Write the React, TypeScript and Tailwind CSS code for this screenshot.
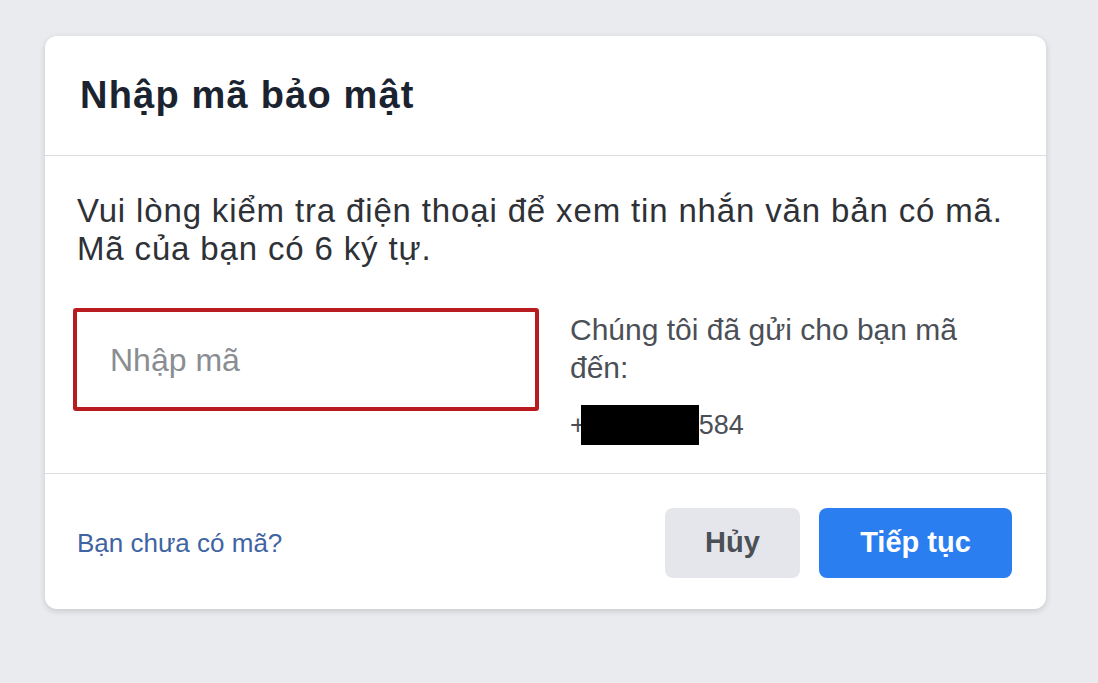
import React from 'react';

export default function App() {
  return (
    <div className="min-h-screen w-full bg-[#e9ebee] pt-[36px] pl-[45px]" style={{ fontFamily: '"Liberation Sans", Arial, sans-serif' }}>
      <div className="w-[1001px] rounded-[12px] bg-white shadow-[0_2px_6px_rgba(0,0,0,0.15)]">
        {/* header */}
        <div className="h-[120px] flex items-center pl-[35px] border-b border-[#dadde1]">
          <h1 className="text-[38px] font-bold text-[#1c2330] tracking-[1.2px]">Nhập mã bảo mật</h1>
        </div>

        {/* body */}
        <div className="h-[318px] pl-[32px] pt-[36px] border-b border-[#dadde1]">
          <p className="text-[33px] leading-[38px] tracking-[0.85px] text-[#2e3136]">
            Vui lòng kiểm tra điện thoại để xem tin nhắn văn bản có mã.
            <br />
            Mã của bạn có 6 ký tự.
          </p>

          <div className="mt-[40px] -ml-[4px] flex gap-[31px]">
            <div className="w-[466px] h-[103px] shrink-0 border-[4px] border-[#b81c1f] rounded-[3px] flex items-center pl-[33px]">
              <span className="text-[32px] text-[#8a8d91]">Nhập mã</span>
            </div>
            <div className="w-[420px] pt-[3px] text-[30px] leading-[38px] text-[#4b4f56]">
              <p>Chúng tôi đã gửi cho bạn mã đến:</p>
              <p className="mt-[18px] flex items-center text-[27px]">
                <span className="-mr-[5px]">+</span>
                <span className="inline-block w-[118px] h-[40px] bg-black" />
                584
              </p>
            </div>
          </div>
        </div>

        {/* footer */}
        <div className="h-[135px] flex items-center justify-between pl-[32px] pr-[34px]">
          <a className="text-[26px] text-[#3f64a3] pt-[4px]">Bạn chưa có mã?</a>
          <div className="flex gap-[19px] pt-[2px]">
            <button className="w-[135px] h-[70px] rounded-[8px] bg-[#e4e6eb] text-[29px] font-bold text-[#4b4f56]">Hủy</button>
            <button className="w-[193px] h-[70px] rounded-[8px] bg-[#2b7ef0] text-[29px] font-bold text-white">Tiếp tục</button>
          </div>
        </div>
      </div>
    </div>
  );
}
